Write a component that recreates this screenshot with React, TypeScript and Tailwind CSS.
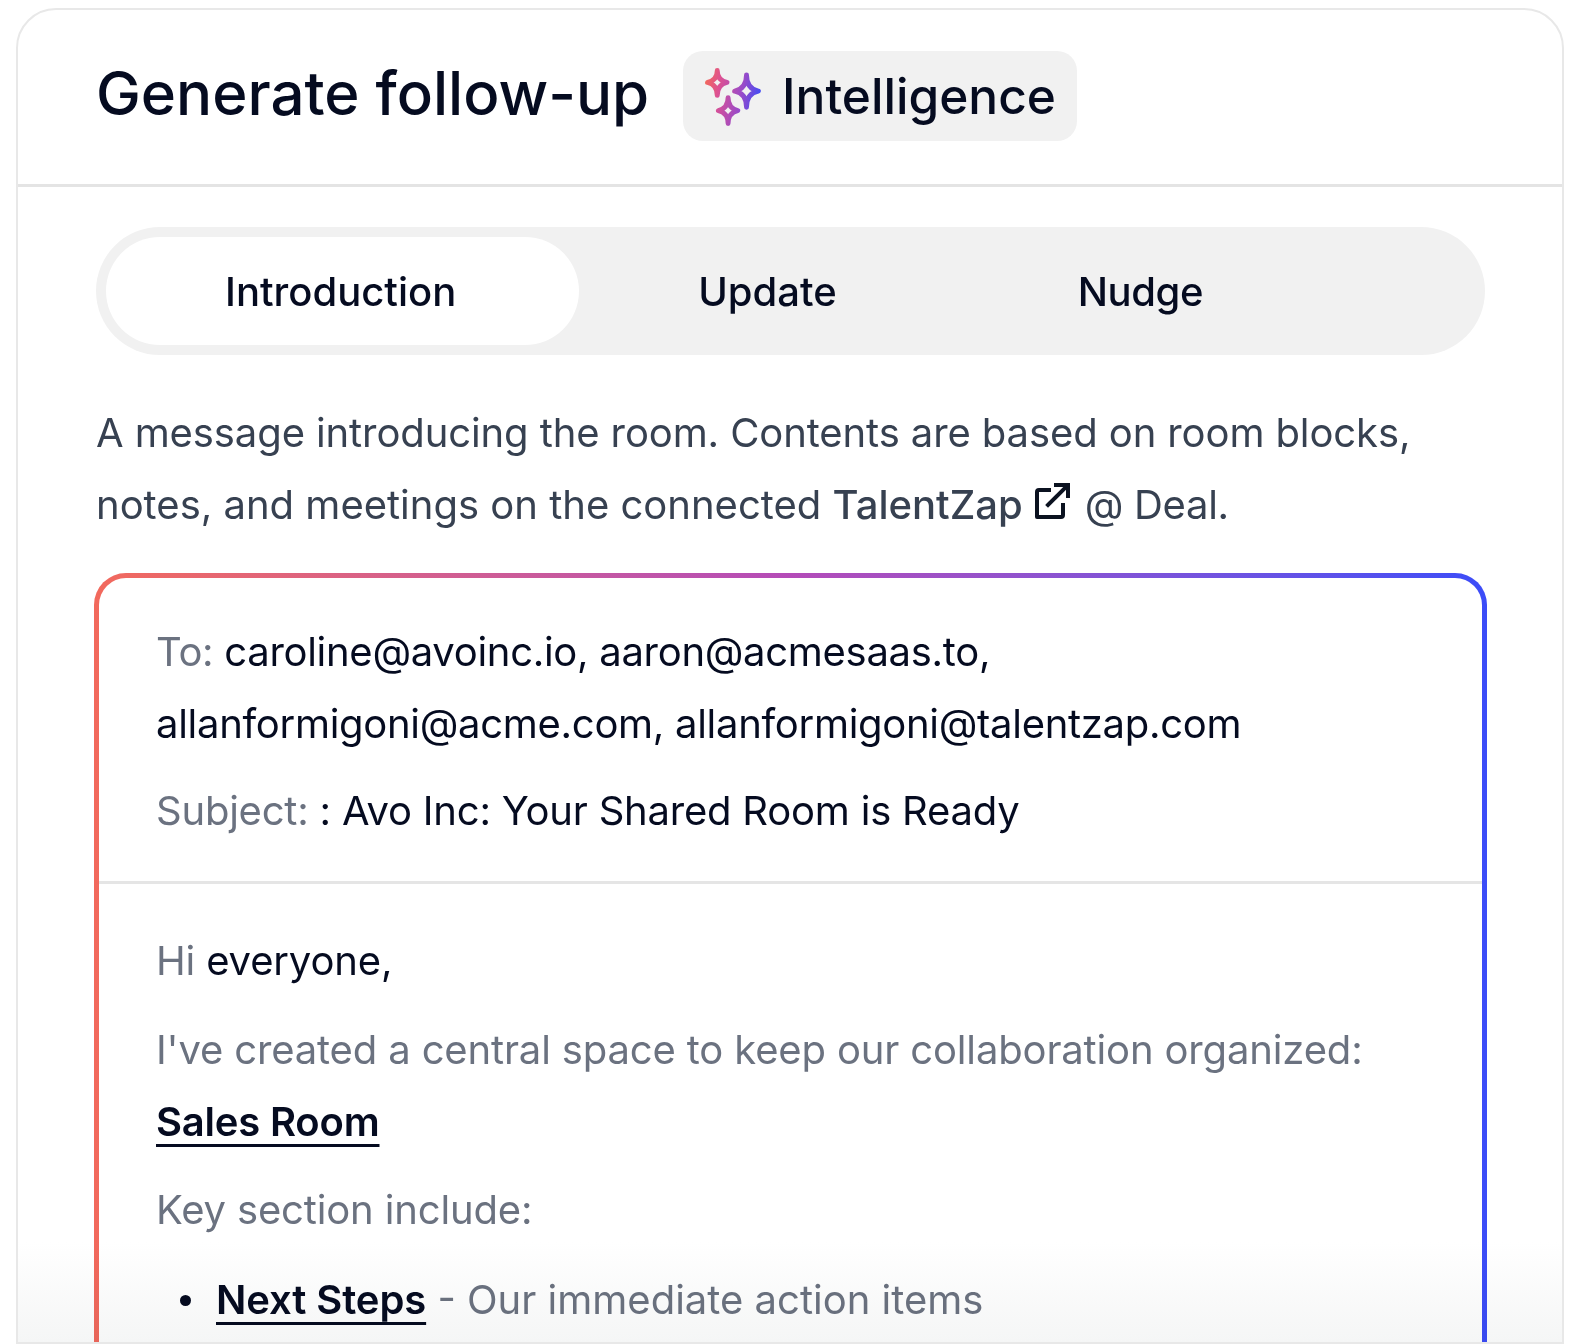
import React from 'react';

const FONT = { fontFamily: 'Inter, "Noto Sans", sans-serif' };

function SparkleIcon() {
  return (
    <svg width="65" height="65" viewBox="0 0 60 60" fill="none" className="shrink-0">
      <defs>
        <linearGradient id="spark" gradientUnits="userSpaceOnUse" x1="3" y1="20" x2="56" y2="30">
          <stop offset="0" stopColor="#f2695c" />
          <stop offset="0.25" stopColor="#dc5193" />
          <stop offset="0.65" stopColor="#9a4bc8" />
          <stop offset="1" stopColor="#3b4cf8" />
        </linearGradient>
      </defs>
      <g stroke="url(#spark)" strokeWidth="4.5" strokeLinejoin="round" strokeLinecap="round">
        <path d="M15 6 Q15 15 24 17 Q15 19 15 29 Q15 19 6 17 Q15 15 15 6Z" />
        <path d="M42 10 Q42 23 53 25 Q42 27 42 40 Q42 27 31 25 Q42 23 42 10Z" />
        <path d="M25 31 Q25 41 34 43 Q25 45 25 55 Q25 45 16 43 Q25 41 25 31Z" />
      </g>
    </svg>
  );
}

function ExternalIcon() {
  return (
    <svg width="36" height="38" viewBox="0 0 36 38" fill="none" className="ml-[11px] mr-[15px] -mb-[1px] inline-block align-baseline" stroke="#0b1220" strokeWidth="4" strokeLinecap="square">
      <path d="M15 8H5a2 2 0 0 0-2 2v25h24a2 2 0 0 0 2-2V23" strokeLinejoin="round" />
      <path d="M14 23L32 5" />
      <path d="M22 3H34V14" />
    </svg>
  );
}

export default function App() {
  return (
    <div className="h-[1344px] w-[1581px] overflow-hidden bg-white pt-[8px] pl-[16px]" style={FONT}>
      <div className="relative h-[1336px] w-[1548px] overflow-hidden rounded-t-[40px] border-2 border-[#e8e8e8]">
        <div className="flex h-[177px] items-center gap-[34px] border-b-[3px] border-[#e4e4e4] px-[78px] pb-[2px]">
          <h1 className="-mt-[6px] text-[60px] leading-none font-medium text-[#050b20]">Generate follow-up</h1>
          <div className="flex h-[90px] items-center gap-[16px] rounded-[20px] bg-[#f1f1f1] pr-[21px] pl-[18px]">
            <SparkleIcon />
            <span className="mt-[2px] text-[49.6px] leading-none font-medium text-[#050b20]">Intelligence</span>
          </div>
        </div>

        <div className="px-[78px] pt-[40px]">
          <div className="flex h-[128px] w-[1389px] items-center rounded-full bg-[#f1f1f1] p-[10px] text-[40px] font-medium text-[#050b20]">
            <div className="flex h-[108px] items-center rounded-full bg-white pt-[2px] pr-[123px] pl-[119px]">Introduction</div>
            <div className="flex h-[108px] items-center pt-[2px] pr-[122px] pl-[119px]">Update</div>
            <div className="flex h-[108px] items-center pt-[2px] pl-[119px] tracking-[-0.4px]">Nudge</div>
          </div>

          <p className="mt-[42px] text-[40px] leading-[72px] text-[#374151]">
            <span className="tracking-[-0.1px]">A message introducing the room. Contents are based on room blocks,</span>
            <br />
            notes, and meetings on the connected <span className="font-medium">TalentZap</span>
            <ExternalIcon />
            <span className="tracking-[-0.3px]">@ Deal.</span>
          </p>

          <div className="mt-[32px] -ml-[2px] w-[1393px] rounded-[32px] bg-gradient-to-r from-[#f2695c] via-[#b44bb8] to-[#3b4cf8] p-[5px]">
            <div className="rounded-[27px] bg-white text-[40px] leading-[72px] text-[#6b7280]">
              <div className="border-b-[3px] border-[#e5e5e5] px-[57px] pt-[38px] pb-[34px]">
                <p className="tracking-[-0.29px]">
                  To: <span className="text-[#050b20]">caroline@avoinc.io, aaron@acmesaas.to,</span>
                  <br />
                  <span className="text-[#050b20]">allanformigoni@acme.com, allanformigoni@talentzap.com</span>
                </p>
                <p className="mt-[15px] tracking-[-0.22px]">
                  Subject: <span className="text-[#050b20]">: Avo Inc: Your Shared Room is Ready</span>
                </p>
              </div>
              <div className="px-[57px] pt-[41px] pb-[160px]">
                <p className="tracking-[-0.15px]">
                  Hi <span className="text-[#050b20]">everyone,</span>
                </p>
                <p className="mt-[17px] tracking-[-0.15px]">
                  I've created a central space to keep our collaboration organized:
                  <br />
                  <a className="font-semibold tracking-[-0.2px] text-[#050b20] underline decoration-[3px] underline-offset-[8px]">Sales Room</a>
                </p>
                <p className="mt-[16px] tracking-[-0.15px]">Key section include:</p>
                <ul className="mt-[18px]">
                  <li className="flex">
                    <span className="mt-[31px] mr-[25px] ml-[24px] h-[11px] w-[11px] shrink-0 rounded-full bg-[#050b20]" />
                    <span>
                      <a className="font-semibold tracking-[-0.1px] text-[#050b20] underline decoration-[3px] underline-offset-[8px]">Next Steps</a> - Our immediate action items
                    </span>
                  </li>
                </ul>
              </div>
            </div>
          </div>
        </div>

        {/* fade over the cut-off end of the message, multiplied so lines and text stay solid */}
        <div className="pointer-events-none absolute bottom-0 left-0 h-[100px] w-full bg-gradient-to-b from-white to-[#f5f6f6] mix-blend-multiply" />
      </div>
    </div>
  );
}
